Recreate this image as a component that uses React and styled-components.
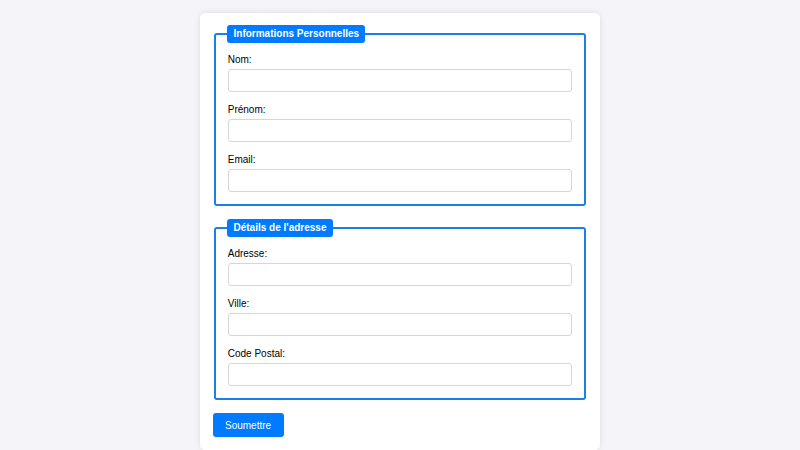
import React from "react";
import styled, { createGlobalStyle } from "styled-components";

const GlobalStyle = createGlobalStyle`
  html, body {
    margin: 0;
    padding: 0;
  }
  body {
    background: #f4f4f9;
    font-family: "Liberation Sans", Arial, sans-serif;
    color: #000;
    padding: 12.5px;
  }
  * { box-sizing: border-box; }
`;

const Container = styled.form`
  width: 400px;
  margin: 0 auto;
  background: #fff;
  padding: 12.5px;
  border-radius: 5px;
  box-shadow: 0 0 6px rgba(0, 0, 0, 0.1);
`;

const Fieldset = styled.fieldset`
  margin: 0 1.25px 13px;
  border: 2px solid #1a7fe8;
  border-radius: 3px;
  padding: 11.5px 12px 0;
  min-width: 0;
`;

const Legend = styled.legend`
  background: #007bff;
  color: #fff;
  font-weight: bold;
  font-size: 10px;
  line-height: 11.5px;
  padding: 3px 6.25px;
  border-radius: 3px;
  margin-left: -0.5px;
`;

const Group = styled.div`
  margin-bottom: 12.5px;
`;

const Label = styled.label`
  display: block;
  font-size: 10px;
  line-height: 11.5px;
  margin-bottom: 3px;
`;

const Input = styled.input`
  display: block;
  width: 100%;
  height: 23px;
  padding: 5px;
  border: 1px solid #d6d6d6;
  border-radius: 3px;
  font-family: inherit;
  font-size: 10px;
  background: #fff;
  outline: none;
`;

const Button = styled.button`
  display: block;
  background: #007bff;
  color: #fff;
  border: none;
  border-radius: 3px;
  height: 24px;
  padding: 0 12.5px;
  font-family: inherit;
  font-size: 10px;
  cursor: pointer;
`;

const sections = [
  {
    legend: "Informations Personnelles",
    fields: [
      { id: "nom", label: "Nom:" },
      { id: "prenom", label: "Prénom:" },
      { id: "email", label: "Email:", type: "email" },
    ],
  },
  {
    legend: "Détails de l'adresse",
    fields: [
      { id: "adresse", label: "Adresse:" },
      { id: "ville", label: "Ville:" },
      { id: "cp", label: "Code Postal:" },
    ],
  },
];

export default function App() {
  return (
    <>
      <GlobalStyle />
      <Container onSubmit={(e) => e.preventDefault()}>
        {sections.map((s) => (
          <Fieldset key={s.legend}>
            <Legend>{s.legend}</Legend>
            {s.fields.map((f) => (
              <Group key={f.id}>
                <Label htmlFor={f.id}>{f.label}</Label>
                <Input id={f.id} type={f.type || "text"} />
              </Group>
            ))}
          </Fieldset>
        ))}
        <Button type="submit">Soumettre</Button>
      </Container>
    </>
  );
}
